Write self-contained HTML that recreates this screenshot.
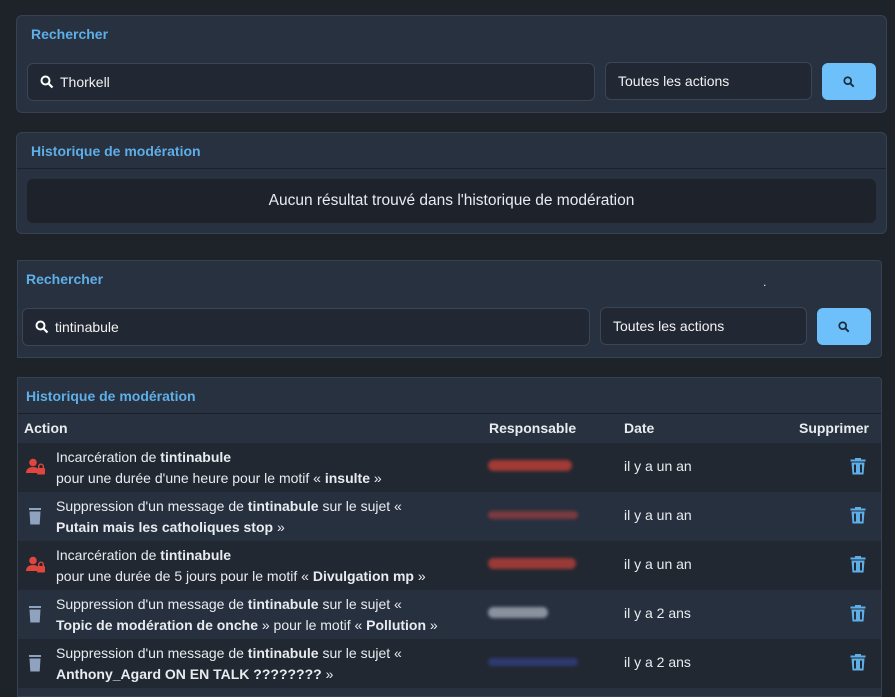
<!DOCTYPE html>
<html><head><meta charset="utf-8"><style>
*{box-sizing:border-box;margin:0;padding:0}
body{width:895px;height:685px;overflow:hidden;background:#1e2229;font-family:"Liberation Sans",sans-serif;color:#e8ecf0;font-size:14px;position:relative}
.panel{position:absolute;background:#28313f;border:1px solid #364151;border-radius:6px}
.title{position:absolute;color:#5eaee8;font-weight:bold;font-size:14px}
.input{position:absolute;background:#222833;border:1px solid #3a4555;border-radius:6px;height:38px;display:flex;align-items:center;padding-left:12px;font-size:14px;color:#f2f2f2}
.btn{position:absolute;background:#6ec0fa;border-radius:6px;height:37px;width:54px;display:flex;align-items:center;justify-content:center}
.row{position:absolute;left:18px;width:863px;height:49px}
.row .t{position:absolute;left:38px;top:4px;line-height:21px;font-size:14px}
.row .d{position:absolute;left:606px;top:15px}
.row .ic{position:absolute;left:8px;top:15px}
.row .tr{position:absolute;left:832px;top:14px}
.blur{position:absolute;left:470px;top:17px;height:11px;border-radius:6px;filter:blur(1.5px)}
b{font-weight:bold}
</style></head><body>
<div class="panel" style="left:16px;top:15px;width:871px;height:98px"></div>
<div class="title" style="left:31px;top:26px">Rechercher</div>
<div class="input" style="left:27px;top:63px;width:568px"><svg width="14" height="14" viewBox="0 0 14 14"><circle cx="5.5" cy="5.5" r="4" fill="none" stroke="#fff" stroke-width="2"/><path d="M8.5 8.5L12.5 12.5" stroke="#fff" stroke-width="2.2"/></svg><span style="margin-left:6px">Thorkell</span></div>
<div class="input" style="left:605px;top:62px;width:207px">Toutes les actions</div>
<div class="btn" style="left:822px;top:63px"><svg width="12" height="12" viewBox="0 0 14 14"><circle cx="5.5" cy="5.5" r="4" fill="none" stroke="#1b2a3a" stroke-width="2"/><path d="M8.5 8.5L12.5 12.5" stroke="#1b2a3a" stroke-width="2.2"/></svg></div>

<div class="panel" style="left:16px;top:132px;width:871px;height:102px"></div>
<div style="position:absolute;left:17px;top:168px;width:869px;height:1px;background:#1c222b"></div>
<div class="title" style="left:31px;top:143px">Historique de modération</div>
<div style="position:absolute;left:27px;top:179px;width:849px;height:44px;background:#1e232b;border-radius:6px;text-align:center;line-height:44px;font-size:15.5px">Aucun résultat trouvé dans l'historique de modération</div>

<div class="panel" style="left:17px;top:260px;width:865px;height:98px;border-radius:0 4px 4px 0"></div>
<div class="title" style="left:26px;top:271px">Rechercher</div>
<div style="position:absolute;left:763px;top:275px;font-size:12px">.</div>
<div class="input" style="left:22px;top:308px;width:568px"><svg width="14" height="14" viewBox="0 0 14 14"><circle cx="5.5" cy="5.5" r="4" fill="none" stroke="#fff" stroke-width="2"/><path d="M8.5 8.5L12.5 12.5" stroke="#fff" stroke-width="2.2"/></svg><span style="margin-left:6px">tintinabule</span></div>
<div class="input" style="left:600px;top:307px;width:207px">Toutes les actions</div>
<div class="btn" style="left:817px;top:308px"><svg width="12" height="12" viewBox="0 0 14 14"><circle cx="5.5" cy="5.5" r="4" fill="none" stroke="#1b2a3a" stroke-width="2"/><path d="M8.5 8.5L12.5 12.5" stroke="#1b2a3a" stroke-width="2.2"/></svg></div>

<div class="panel" style="left:17px;top:377px;width:865px;height:320px;border-radius:0 4px 0 0"></div>
<div class="title" style="left:26px;top:388px">Historique de modération</div>
<div style="position:absolute;left:18px;top:413px;width:863px;height:1px;background:#1a2029"></div>
<div style="position:absolute;left:18px;top:414px;width:863px;height:29px;background:#28313f;font-weight:bold;font-size:14px">
<span style="position:absolute;left:6px;top:6px">Action</span>
<span style="position:absolute;left:471px;top:6px">Responsable</span>
<span style="position:absolute;left:606px;top:6px">Date</span>
<span style="position:absolute;right:12px;top:6px">Supprimer</span></div>

<div class="row" style="top:443px;background:#222832">
<svg class="ic" width="20" height="18" viewBox="0 0 20 18"><circle cx="7" cy="4.5" r="3.8" fill="#e0463e"/><path d="M0 15c0-4 3-6 7-6 2 0 3 .4 4 1v5z" fill="#e0463e"/><rect x="11" y="10" width="8" height="6.5" rx="1" fill="#e0463e"/><path d="M12.7 10.5v-2a2.3 2.3 0 0 1 4.6 0v2" fill="none" stroke="#e0463e" stroke-width="1.4"/></svg>
<div class="t">Incarcération de <b>tintinabule</b><br>pour une durée d'une heure pour le motif « <b>insulte</b> »</div>
<div class="blur" style="width:84px;background:#a23a35"></div>
<div class="d">il y a un an</div>
<svg class="tr" width="16" height="18" viewBox="0 0 16 18"><path d="M5 1h6v1.5h4.5v2H.5v-2H5z" fill="#5eaee8"/><path d="M1.5 5.5h13l-1 12h-11z" fill="#5eaee8"/><rect x="4" y="7.5" width="2" height="8" fill="#222832"/><rect x="10" y="7.5" width="2" height="8" fill="#222832"/></svg>
</div>
<div class="row" style="top:492px;background:#27303e">
<svg class="ic" width="20" height="18" viewBox="0 0 20 18"><rect x="3" y="1" width="12" height="2" fill="#8fa3be"/><path d="M3.5 4.5h11l-.8 13h-9.4z" fill="#8fa3be"/></svg>
<div class="t">Suppression d'un message de <b>tintinabule</b> sur le sujet «<br><b>Putain mais les catholiques stop</b> »</div>
<div class="blur" style="width:90px;height:8px;top:19px;background:#7a3a40"></div>
<div class="d">il y a un an</div>
<svg class="tr" width="16" height="18" viewBox="0 0 16 18"><path d="M5 1h6v1.5h4.5v2H.5v-2H5z" fill="#5eaee8"/><path d="M1.5 5.5h13l-1 12h-11z" fill="#5eaee8"/><rect x="4" y="7.5" width="2" height="8" fill="#27303e"/><rect x="10" y="7.5" width="2" height="8" fill="#27303e"/></svg>
</div>
<div class="row" style="top:541px;background:#222832">
<svg class="ic" width="20" height="18" viewBox="0 0 20 18"><circle cx="7" cy="4.5" r="3.8" fill="#e0463e"/><path d="M0 15c0-4 3-6 7-6 2 0 3 .4 4 1v5z" fill="#e0463e"/><rect x="11" y="10" width="8" height="6.5" rx="1" fill="#e0463e"/><path d="M12.7 10.5v-2a2.3 2.3 0 0 1 4.6 0v2" fill="none" stroke="#e0463e" stroke-width="1.4"/></svg>
<div class="t">Incarcération de <b>tintinabule</b><br>pour une durée de 5 jours pour le motif « <b>Divulgation mp</b> »</div>
<div class="blur" style="width:88px;background:#9a3a36"></div>
<div class="d">il y a un an</div>
<svg class="tr" width="16" height="18" viewBox="0 0 16 18"><path d="M5 1h6v1.5h4.5v2H.5v-2H5z" fill="#5eaee8"/><path d="M1.5 5.5h13l-1 12h-11z" fill="#5eaee8"/><rect x="4" y="7.5" width="2" height="8" fill="#222832"/><rect x="10" y="7.5" width="2" height="8" fill="#222832"/></svg>
</div>
<div class="row" style="top:590px;background:#27303e">
<svg class="ic" width="20" height="18" viewBox="0 0 20 18"><rect x="3" y="1" width="12" height="2" fill="#8fa3be"/><path d="M3.5 4.5h11l-.8 13h-9.4z" fill="#8fa3be"/></svg>
<div class="t">Suppression d'un message de <b>tintinabule</b> sur le sujet «<br><b>Topic de modération de onche</b> » pour le motif « <b>Pollution</b> »</div>
<div class="blur" style="width:60px;background:#8a92a0"></div>
<div class="d">il y a 2 ans</div>
<svg class="tr" width="16" height="18" viewBox="0 0 16 18"><path d="M5 1h6v1.5h4.5v2H.5v-2H5z" fill="#5eaee8"/><path d="M1.5 5.5h13l-1 12h-11z" fill="#5eaee8"/><rect x="4" y="7.5" width="2" height="8" fill="#27303e"/><rect x="10" y="7.5" width="2" height="8" fill="#27303e"/></svg>
</div>
<div class="row" style="top:639px;background:#222832">
<svg class="ic" width="20" height="18" viewBox="0 0 20 18"><rect x="3" y="1" width="12" height="2" fill="#8fa3be"/><path d="M3.5 4.5h11l-.8 13h-9.4z" fill="#8fa3be"/></svg>
<div class="t">Suppression d'un message de <b>tintinabule</b> sur le sujet «<br><b>Anthony_Agard ON EN TALK ????????</b> »</div>
<div class="blur" style="width:90px;height:8px;top:19px;background:#2e3a70"></div>
<div class="d">il y a 2 ans</div>
<svg class="tr" width="16" height="18" viewBox="0 0 16 18"><path d="M5 1h6v1.5h4.5v2H.5v-2H5z" fill="#5eaee8"/><path d="M1.5 5.5h13l-1 12h-11z" fill="#5eaee8"/><rect x="4" y="7.5" width="2" height="8" fill="#222832"/><rect x="10" y="7.5" width="2" height="8" fill="#222832"/></svg>
</div>
</body></html>
